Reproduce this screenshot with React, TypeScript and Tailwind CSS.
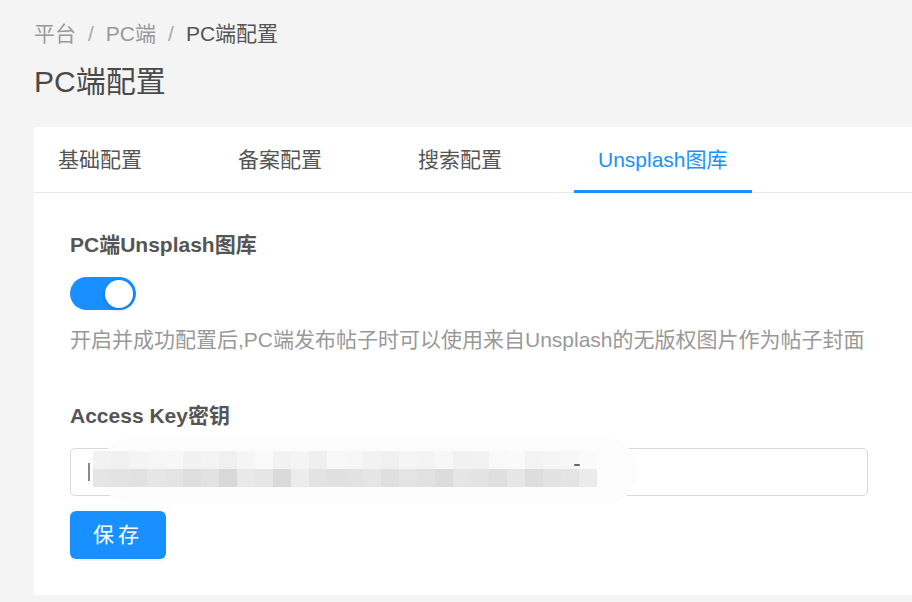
import React from 'react';

const font = "font-['Liberation_Sans','Noto_Sans_CJK_SC',sans-serif]";

const tabs = ['基础配置', '备案配置', '搜索配置', 'Unsplash图库'];

// redacted key, drawn as a mosaic like the screenshot
const topRow = [
    'bg-[#f2f2f2]', 'bg-[#f0f0f0]', 'bg-[#f4f4f4]', 'bg-[#f6f6f6]', 'bg-[#f7f7f7]', 'bg-[#f1f1f1]', 'bg-[#f3f3f3]',
    'bg-[#f0f0f0]', 'bg-[#f5f5f5]', 'bg-[#f9f9f9]', 'bg-[#f2f2f2]', 'bg-[#f4f4f4]', 'bg-[#efefef]', 'bg-[#f8f8f8]',
    'bg-[#f6f6f6]', 'bg-[#f2f2f2]', 'bg-[#f0f0f0]', 'bg-[#f5f5f5]', 'bg-[#f3f3f3]', 'bg-[#f7f7f7]', 'bg-[#f1f1f1]',
    'bg-[#f2f2f2]', 'bg-[#f9f9f9]', 'bg-[#fafafa]', 'bg-[#f3f3f3]', 'bg-[#f5f5f5]', 'bg-[#f6f6f6]', 'bg-[#fafafa]',
];
const bottomRow = [
    'bg-[#e5e5e5]', 'bg-[#e3e3e3]', 'bg-[#e1e1e1]', 'bg-[#e6e6e6]', 'bg-[#e4e4e4]', 'bg-[#dedede]', 'bg-[#e2e2e2]',
    'bg-[#d8d8d8]', 'bg-[#e9e9e9]', 'bg-[#e6e6e6]', 'bg-[#dadada]', 'bg-[#ececec]', 'bg-[#e3e3e3]', 'bg-[#e0e0e0]',
    'bg-[#e2e2e2]', 'bg-[#e5e5e5]', 'bg-[#dfdfdf]', 'bg-[#e4e4e4]', 'bg-[#e1e1e1]', 'bg-[#dcdcdc]', 'bg-[#e5e5e5]',
    'bg-[#e3e3e3]', 'bg-[#dfdfdf]', 'bg-[#e6e6e6]', 'bg-[#dddddd]', 'bg-[#e2e2e2]', 'bg-[#e4e4e4]', 'bg-[#ebebeb]',
];

const Switch: React.FC = () => (
    <div className="relative h-[33px] w-[66px] rounded-full bg-[#1890ff]">
        <span className="absolute right-[3px] top-[2.5px] h-[28px] w-[28px] rounded-full bg-white shadow-[0_2px_4px_rgba(0,35,11,0.2)]" />
    </div>
);

const App: React.FC = () => {
    return (
        <div className={`${font} h-[602px] w-[912px] overflow-hidden bg-[#f4f4f4] pl-[34px] pt-[22px]`}>
            <div className="flex h-[24px] items-center text-[21px] leading-[24px] text-[#999]">
                <span>平台</span>
                <span className="mx-3 text-[#aaa]">/</span>
                <span>PC端</span>
                <span className="mx-3 text-[#aaa]">/</span>
                <span className="text-[#555]">PC端配置</span>
            </div>
            <div className="mt-[16px] h-[40px] text-[30px] leading-[40px] text-[#4a4a4a]">PC端配置</div>

            <div className="mt-[25px] w-[900px] bg-white">
                <div className="flex h-[66px] border-b border-[#e8e8e8]">
                    {tabs.map((t, i) => (
                        <div
                            key={t}
                            className={`relative flex h-[65px] shrink-0 items-center whitespace-nowrap px-6 text-[21px] ${i < 3 ? 'w-[180px]' : ''} ${i === 3 ? 'text-[#1890ff]' : 'text-[#555]'}`}
                        >
                            {t}
                            {i === 3 && <span className="absolute bottom-[-1px] left-0 right-0 h-[3px] bg-[#1890ff]" />}
                        </div>
                    ))}
                </div>

                <div className="px-[36px] pb-[36px] pt-[40px]">
                    <div className="text-[21px] font-bold leading-[24px] text-[#555]">PC端Unsplash图库</div>
                    <div className="mt-[20px]">
                        <Switch />
                    </div>
                    <div className="mt-[18px] text-[21px] leading-[24px] text-[#999]">
                        开启并成功配置后,PC端发布帖子时可以使用来自Unsplash的无版权图片作为帖子封面
                    </div>

                    <div className="mt-[52px] text-[21px] font-bold leading-[24px] text-[#555]">Access Key密钥</div>
                    <div className="relative mt-[20px] flex h-[48px] w-[798px] items-center rounded-[5px] border border-[#d9d9d9] pl-[17px]">
                        <span className="h-[18px] w-[1.5px] bg-[#888]" />
                        {/* redaction smear */}
                        <div className="absolute left-[30px] top-[-11px] h-[66px] w-[535px] rounded-[30px] bg-[#fcfcfc]" />
                        <div className="absolute left-[22px] top-[2px] flex flex-col">
                            <div className="flex">
                                {topRow.map((c, i) => (
                                    <span key={i} className={`h-[18px] w-[18px] ${c}`} />
                                ))}
                            </div>
                            <div className="flex">
                                {bottomRow.map((c, i) => (
                                    <span key={i} className={`h-[18px] w-[18px] ${c}`} />
                                ))}
                            </div>
                        </div>
                        <span className="absolute left-[503px] top-[15px] h-[2px] w-[6px] rounded bg-[#666]" />
                    </div>

                    <button className="mt-[15px] flex h-[48px] w-[96px] items-center justify-center rounded-[6px] bg-[#1890ff] text-[21px] tracking-[4px] text-white shadow-[0_2px_0_rgba(0,0,0,0.045)]">
                        保存
                    </button>
                </div>
            </div>
        </div>
    );
};

export default App;
